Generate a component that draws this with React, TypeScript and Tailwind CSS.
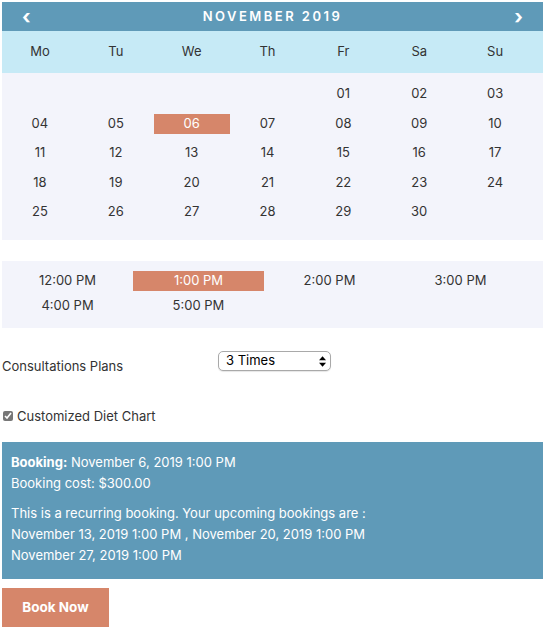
const weekdays = ["Mo", "Tu", "We", "Th", "Fr", "Sa", "Su"];

// November 2019 starts on a Friday
const days: (string | null)[] = [
  null, null, null, null,
  ...Array.from({ length: 30 }, (_, i) => String(i + 1).padStart(2, "0")),
];

const times = ["12:00 PM", "1:00 PM", "2:00 PM", "3:00 PM", "4:00 PM", "5:00 PM"];

export default function App() {
  return (
    <div className="min-h-[631px] bg-white px-[2px] pt-[2px] font-['Inter','Liberation_Sans',sans-serif] text-[#333]">
      <div className="w-[541px]">
        <div className="flex h-[29px] items-center justify-between bg-[#5f9ab8] px-[20px] text-white">
          <span className="text-[20px] font-bold leading-none">‹</span>
          <span className="text-[13px] font-semibold tracking-[0.19em]">NOVEMBER 2019</span>
          <span className="text-[20px] font-bold leading-none">›</span>
        </div>

        <div className="h-[42px] bg-[#c6eaf6]">
          <div className="grid h-full w-[531px] grid-cols-7 items-center">
            {weekdays.map((d) => (
              <span key={d} className="text-center text-[13px]">
                {d}
              </span>
            ))}
          </div>
        </div>

        <div className="bg-[#f3f4fb] pt-[11px] pb-[18px]">
          <div className="grid w-[531px] grid-cols-7 gap-y-[9.5px]">
            {days.map((d, i) =>
              d ? (
                <span
                  key={i}
                  className={
                    "flex h-[20px] items-center justify-center text-[13px] " +
                    (d === "06" ? "bg-[#d6866a] text-white" : "")
                  }
                >
                  {d}
                </span>
              ) : (
                <span key={i} className="h-[20px]" />
              )
            )}
          </div>
        </div>

        <div className="mt-[21px] bg-[#f3f4fb] pt-[10px] pb-[12px]">
          <div className="grid w-[524px] grid-cols-4 gap-y-[5px]">
            {times.map((t) => (
              <span
                key={t}
                className={
                  "flex h-[20px] items-center justify-center text-[13px] " +
                  (t === "1:00 PM" ? "bg-[#d6866a] text-white" : "")
                }
              >
                {t}
              </span>
            ))}
          </div>
        </div>

        <div className="mt-[23px] flex items-start text-[13px]">
          <span className="mt-[6px] w-[216px]">Consultations Plans</span>
          <div className="flex h-[20px] w-[113px] items-center justify-between rounded-[5px] border border-[#a9a9a9] bg-white pr-[4px] pl-[7px] text-[13px] text-black shadow-[0_1px_1px_rgba(0,0,0,0.1)]">
            <span>3 Times</span>
            <svg viewBox="0 0 8 12" className="h-[11px] w-[7px]" fill="currentColor">
              <path d="M4 0 L8 4.5 H0 Z" />
              <path d="M4 12 L8 7.5 H0 Z" />
            </svg>
          </div>
        </div>

        <label className="mt-[30px] flex items-center gap-[4px] text-[13px]">
          <input type="checkbox" defaultChecked className="ml-[1px] h-[10px] w-[10px] accent-[#777]" />
          <span>Customized Diet Chart</span>
        </label>

        <div className="mt-[16px] bg-[#5f9ab8] px-[9px] pt-[10px] pb-[13px] text-[13px] leading-[21px] text-white">
          <p>
            <b>Booking:</b> November 6, 2019 1:00 PM
          </p>
          <p>Booking cost: $300.00</p>
          <p className="mt-[9px]">This is a recurring booking. Your upcoming bookings are :</p>
          <p>November 13, 2019 1:00 PM , November 20, 2019 1:00 PM</p>
          <p>November 27, 2019 1:00 PM</p>
        </div>

        <button className="mt-[9px] h-[39px] w-[107px] bg-[#d6866a] text-[13.5px] font-bold text-white">
          Book Now
        </button>
      </div>
    </div>
  );
}
